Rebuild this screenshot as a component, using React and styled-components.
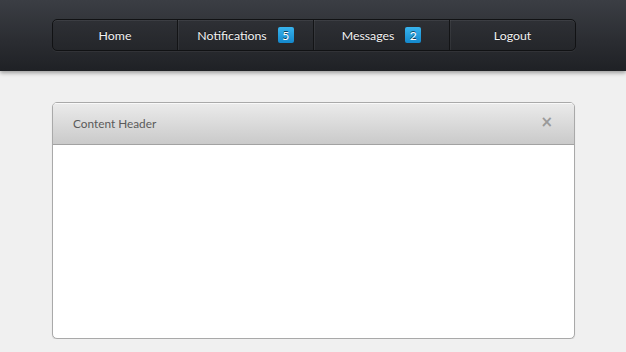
import React from "react";
import styled, { createGlobalStyle } from "styled-components";

const GlobalStyle = createGlobalStyle`
  html, body {
    margin: 0;
    padding: 0;
    background: #f0f0f0;
    font-family: "Lato", "Open Sans", sans-serif;
  }
`;

const TopBar = styled.header`
  height: 71px;
  background: linear-gradient(to bottom, #3b3e44 0%, #2a2c31 60%, #1f2125 100%);
  box-shadow: 0 2px 4px rgba(0, 0, 0, 0.35);
  display: flex;
  align-items: flex-start;
  padding: 19px 0 0 52px;
  box-sizing: border-box;
`;

const Nav = styled.nav`
  display: grid;
  grid-template-columns: 124px 136px 136px 126px;
  height: 32px;
  border: 1px solid #111214;
  border-radius: 5px;
  background: linear-gradient(to bottom, #2e3035, #24262a);
  box-shadow: inset 0 1px 0 rgba(255, 255, 255, 0.07), 0 1px 0 rgba(255, 255, 255, 0.05);
  box-sizing: border-box;
  overflow: hidden;
`;

const NavItem = styled.a`
  display: flex;
  align-items: center;
  justify-content: center;
  gap: 11px;
  color: #f2f2f2;
  font-size: 12.3px;
  text-decoration: none;
  border-left: ${(p) => (p.$first ? "none" : "1px solid #131416")};
  box-shadow: ${(p) => (p.$first ? "none" : "inset 1px 0 0 rgba(255,255,255,0.06)")};
  text-shadow: 0 -1px 0 rgba(0, 0, 0, 0.6);
`;

const Badge = styled.span`
  display: inline-flex;
  align-items: center;
  justify-content: center;
  width: 16px;
  height: 16px;
  background: linear-gradient(to bottom, #38b4ee, #1488cc);
  color: #fff;
  font-size: 12px;
  border-radius: 2px;
`;

const Main = styled.main`
  padding: 31px 0 0 52px;
`;

const Panel = styled.section`
  width: 523px;
  height: 237px;
  border: 1px solid #a9a9a9;
  border-radius: 5px;
  background: #fff;
  box-shadow: 0 1px 1px rgba(0, 0, 0, 0.12);
  box-sizing: border-box;
  overflow: hidden;
  display: flex;
  flex-direction: column;
`;

const PanelHeader = styled.div`
  height: 42px;
  flex: none;
  display: flex;
  align-items: center;
  justify-content: space-between;
  padding: 0 21px 0 20px;
  background: linear-gradient(to bottom, #ebebeb, #cacaca);
  border-bottom: 1px solid #a2a2a2;
  box-shadow: inset 0 1px 0 rgba(255, 255, 255, 0.7);
  box-sizing: border-box;
`;

const Title = styled.h2`
  margin: 0;
  font-size: 11.8px;
  font-weight: 400;
  color: #5a5a5a;
`;

const Close = styled.button`
  border: none;
  background: none;
  padding: 0;
  color: #9a9a9a;
  font-size: 15px;
  font-weight: 700;
  line-height: 1;
  cursor: pointer;
  margin-top: -3px;
  font-family: "DejaVu Sans", sans-serif;
`;

const PanelBody = styled.div`
  flex: 1;
`;

export default function App() {
  return (
    <>
      <GlobalStyle />
      <TopBar>
        <Nav>
          <NavItem $first href="#">Home</NavItem>
          <NavItem href="#">
            Notifications <Badge>5</Badge>
          </NavItem>
          <NavItem href="#">
            Messages <Badge>2</Badge>
          </NavItem>
          <NavItem href="#">Logout</NavItem>
        </Nav>
      </TopBar>
      <Main>
        <Panel>
          <PanelHeader>
            <Title>Content Header</Title>
            <Close aria-label="Close">×</Close>
          </PanelHeader>
          <PanelBody />
        </Panel>
      </Main>
    </>
  );
}
